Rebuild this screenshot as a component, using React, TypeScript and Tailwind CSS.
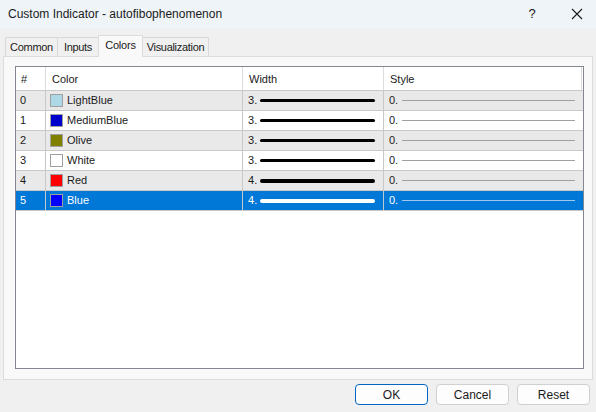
import React from 'react';

const rows = [
  { idx: 0, name: 'LightBlue', color: '#add8e6', width: 3 },
  { idx: 1, name: 'MediumBlue', color: '#0000cd', width: 3 },
  { idx: 2, name: 'Olive', color: '#808000', width: 3 },
  { idx: 3, name: 'White', color: '#ffffff', width: 3 },
  { idx: 4, name: 'Red', color: '#ff0000', width: 4 },
  { idx: 5, name: 'Blue', color: '#0000ff', width: 4 },
];

const tabs = [
  { label: 'Common', w: 'w-[53px]' },
  { label: 'Inputs', w: 'w-[42px]' },
  { label: 'Colors', w: 'w-[45px]' },
  { label: 'Visualization', w: 'w-[67px]' },
];

export default function App() {
  return (
    <div className="w-[596px] h-[412px] bg-[#f0f0f0] flex flex-col font-['Liberation_Sans',Arial,sans-serif] text-[#1a1a1a] overflow-hidden">
      {/* title bar */}
      <div className="h-[28px] bg-[#eff4f9] flex items-center pl-[8px] shrink-0">
        <span className="text-[12px] text-[#1b1b1b] flex-1">Custom Indicator - autofibophenomenon</span>
        <span className="w-[20px] text-center text-[13px] mr-[29px]">?</span>
        <svg width="12" height="12" viewBox="0 0 12 12" className="mr-[13px]">
          <path d="M1 1 L11 11 M11 1 L1 11" stroke="#1b1b1b" strokeWidth="1.1" />
        </svg>
      </div>

      {/* tabs */}
      <div className="flex items-end h-[28px] pl-[5px] shrink-0">
        {tabs.map((t) => {
          const active = t.label === 'Colors';
          return (
            <div
              key={t.label}
              className={
                active
                  ? `${t.w} h-[22px] bg-[#f9f9f9] border border-b-0 border-[#dcdcdc] -ml-px text-[11px] flex items-center justify-center -mb-px relative z-10 pb-[3px] tracking-[-0.2px]`
                  : `${t.w} h-[19px] bg-[#f0f0f0] border border-b-0 border-[#d9d9d9] -ml-px first:ml-0 text-[11px] flex items-center justify-center tracking-[-0.3px]`
              }
            >
              {t.label}
            </div>
          );
        })}
      </div>

      {/* panel */}
      <div className="mx-[3px] h-[324px] shrink-0 border border-[#dcdcdc] bg-[#f9f9f9] pt-[9px] pl-[11px] pr-[8px]">
        <div className="h-[303px] border border-[#828790] bg-white text-[11px]">
          <div className="grid grid-cols-[30px_197px_141px_1fr] h-[24px] border-b border-[#c8c8c8]">
            <div className="border-r border-[#dcdcdc] flex items-center pl-[5px] pt-px">#</div>
            <div className="border-r border-[#dcdcdc] flex items-center pl-[6px] pt-px">Color</div>
            <div className="border-r border-[#dcdcdc] flex items-center pl-[6px] pt-px">Width</div>
            <div className="border-r border-[#dcdcdc] flex items-center pl-[6px] pt-px mr-px">Style</div>
          </div>
          {rows.map((r) => {
            const sel = r.idx === 5;
            const bg = sel ? 'bg-[#0078d7] text-white' : r.idx % 2 === 0 ? 'bg-[#e9e9e9]' : 'bg-white';
            return (
              <div key={r.idx} className={`grid grid-cols-[30px_197px_141px_1fr] h-[20px] border-b border-[#c8c8c8] ${bg}`}>
                <div className="border-r border-[#c8c8c8] flex items-center pl-[4px]">{r.idx}</div>
                <div className="border-r border-[#c8c8c8] flex items-center pl-[4px] gap-[4px]">
                  <span className="w-[13px] h-[13px] border border-[#a0a0a0]" style={{ backgroundColor: r.color }} />
                  <span>{r.name}</span>
                </div>
                <div className="border-r border-[#c8c8c8] flex items-center pl-[5px] pr-[8px] gap-[3px]">
                  <span>{r.width}.</span>
                  <span
                    className={`flex-1 rounded-full ${sel ? 'bg-white' : 'bg-black'} ${r.width === 4 ? 'h-[4px]' : 'h-[3px]'}`}
                  />
                </div>
                <div className="flex items-center pl-[5px] pr-[7px] gap-[4px] mr-px">
                  <span>0.</span>
                  <span className={`flex-1 h-px ${sel ? 'bg-[#a0c8ee]' : 'bg-[#a0a0a0]'}`} />
                </div>
              </div>
            );
          })}
        </div>
      </div>

      {/* buttons */}
      <div className="flex justify-end gap-[8px] pr-[6px] pt-[4px]">
        <button className="w-[73px] h-[21px] rounded-[4px] border border-[#0067c0] bg-[#fdfdfd] text-[12px] text-[#1b1b1b]">OK</button>
        <button className="w-[73px] h-[21px] rounded-[4px] border border-[#d0d0d0] bg-[#fdfdfd] text-[12px] text-[#1b1b1b]">Cancel</button>
        <button className="w-[73px] h-[21px] rounded-[4px] border border-[#d0d0d0] bg-[#fdfdfd] text-[12px] text-[#1b1b1b]">Reset</button>
      </div>
    </div>
  );
}
